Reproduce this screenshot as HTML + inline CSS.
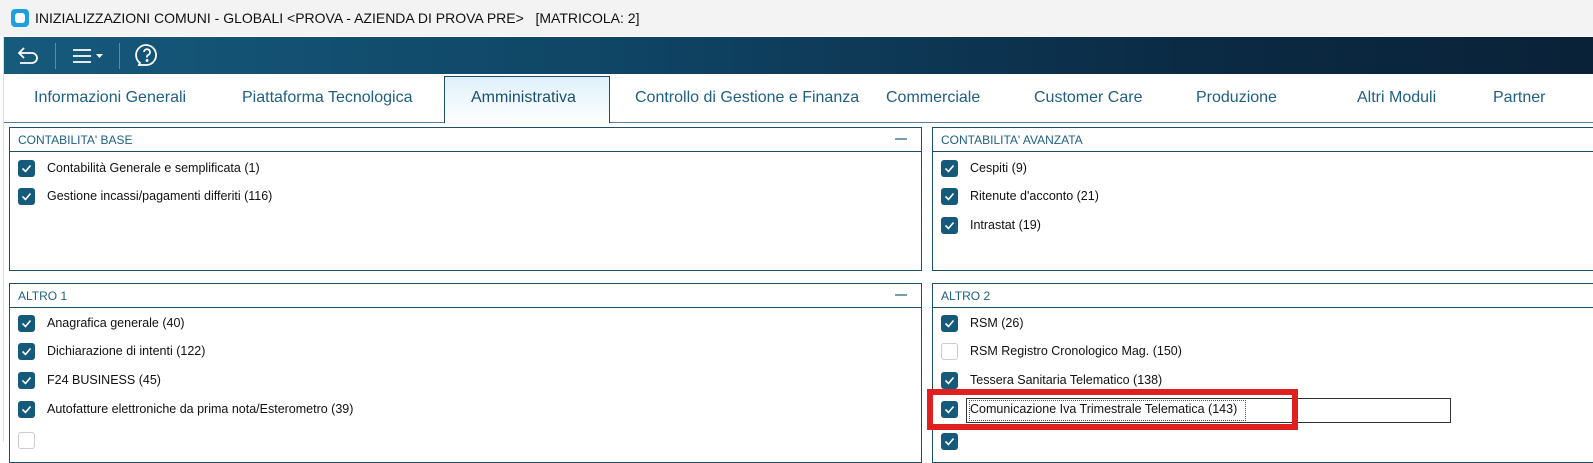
<!DOCTYPE html>
<html><head><meta charset="utf-8"><style>
*{box-sizing:border-box;margin:0;padding:0}
body{width:1593px;height:442px;overflow:hidden;background:#fff;font-family:"Liberation Sans",sans-serif;position:relative}
.abs{position:absolute}
.title{left:0;top:0;width:1593px;height:36px;background:#f3f3f3;font-size:14px;color:#111;}
.tb{left:4px;top:37px;width:1589px;height:37px;background:linear-gradient(90deg,#165a7c 0%,#0f4464 40%,#0b2a44 75%,#0a2238 100%)}
.tab{top:89px;font-size:16px;color:#1e5f85}
.panel{border:1px solid #1d4f6a;background:#fff}
.ph{position:absolute;left:0;right:0;top:0;height:24px;border-bottom:1px solid #1d4f6a;font-size:12px;color:#1e5f85;padding:5px 0 0 8px}
.cb{position:absolute;width:17px;height:17px;border-radius:3px;background:#155a7a}
.cb svg{position:absolute;left:3px;top:3px}
.cb.off{background:#fff;border:1px solid #ccc}
.lb{position:absolute;font-size:12.5px;color:#111}
.min{position:absolute;right:14px;top:10px;width:12px;height:2px;background:#7a9cb0}
</style></head><body>
<div class="abs title">
 <div class="abs" style="left:11px;top:9px;width:18px;height:18px;border-radius:4px;background:#1ea0e0"><div class="abs" style="left:4px;top:4px;width:10px;height:10px;border-radius:3px;background:#fff"></div></div>
 <div class="abs" style="left:35px;top:10px">INIZIALIZZAZIONI COMUNI - GLOBALI &lt;PROVA - AZIENDA DI PROVA PRE&gt;&nbsp;&nbsp;&nbsp;[MATRICOLA: 2]</div>
</div>
<div class="abs" style="left:0;top:36px;width:4px;height:406px;background:#fff;border-right:1px solid #ddd"></div>
<div class="abs tb">
 <svg class="abs" style="left:12px;top:8px" width="26" height="22" viewBox="0 0 26 22" fill="none" stroke="#fff" stroke-width="1.8"><path d="M8 3 L3 8 L8 13 M3 8 H16 a5 5 0 0 1 0 10 H4"/></svg>
 <div class="abs" style="left:51px;top:6px;width:1px;height:26px;background:#5d8aa5"></div>
 <svg class="abs" style="left:68px;top:10px" width="34" height="18" viewBox="0 0 34 18" stroke="#fff" stroke-width="1.8"><path d="M1 3H19M1 9H19M1 15H19"/><path d="M24 7h7l-3.5 4z" fill="#fff" stroke="none"/></svg>
 <div class="abs" style="left:115px;top:6px;width:1px;height:26px;background:#5d8aa5"></div>
 <svg class="abs" style="left:130px;top:5px" width="26" height="26" viewBox="0 0 26 26" fill="none" stroke="#fff" stroke-width="1.8"><path d="M6 21 A10 10 0 1 1 13 23 H5 Z"/><path d="M10 10a3 3 0 1 1 4 3c-1 .5-1 1-1 2.5"/><circle cx="13" cy="18.5" r=".6" fill="#fff"/></svg>
</div>
<div class="abs" style="left:4px;top:122px;width:1589px;height:1px;background:#5a7d94"></div>
<div class="abs" style="left:444px;top:76px;width:166px;height:47px;border:1px solid #1d4f6a;border-bottom:none;background:linear-gradient(#dff0fb,#fff)"></div>
<div class="abs tab" style="left:34px">Informazioni Generali</div>
<div class="abs tab" style="left:242px">Piattaforma Tecnologica</div>
<div class="abs tab" style="left:471px;color:#1a4f6e">Amministrativa</div>
<div class="abs tab" style="left:635px">Controllo di Gestione e Finanza</div>
<div class="abs tab" style="left:886px">Commerciale</div>
<div class="abs tab" style="left:1034px">Customer Care</div>
<div class="abs tab" style="left:1196px">Produzione</div>
<div class="abs tab" style="left:1357px">Altri Moduli</div>
<div class="abs tab" style="left:1493px">Partner</div>

<div class="abs panel" style="left:9px;top:127px;width:913px;height:144px"><div class="ph">CONTABILITA' BASE</div><div class="min"></div></div>
<div class="abs panel" style="left:932px;top:127px;width:680px;height:144px"><div class="ph">CONTABILITA' AVANZATA</div></div>
<div class="abs panel" style="left:9px;top:283px;width:913px;height:180px"><div class="ph">ALTRO 1</div><div class="min"></div></div>
<div class="abs panel" style="left:932px;top:283px;width:680px;height:180px"><div class="ph">ALTRO 2</div></div>

<div id="items"></div>
<script>
const ck='<svg width="11" height="11" viewBox="0 0 11 11"><path d="M1.5 5.5 L4.5 8.5 L9.5 2.5" fill="none" stroke="#fff" stroke-width="1.6"/></svg>';
const items=[[18,160,"Contabilità Generale e semplificata (1)",1],[18,188,"Gestione incassi/pagamenti differiti (116)",1],
[941,160,"Cespiti (9)",1],[941,188,"Ritenute d'acconto (21)",1],[941,217,"Intrastat (19)",1],
[18,315,"Anagrafica generale (40)",1],[18,343,"Dichiarazione di intenti (122)",1],[18,372,"F24 BUSINESS (45)",1],[18,401,"Autofatture elettroniche da prima nota/Esterometro (39)",1],[18,432,"",0],
[941,315,"RSM (26)",1],[941,343,"RSM Registro Cronologico Mag. (150)",0],[941,372,"Tessera Sanitaria Telematico (138)",1],[941,401,"Comunicazione Iva Trimestrale Telematica (143)",1],[941,433,"",1]];
let h='';for(const [x,y,t,c] of items){h+=`<div class="cb${c?'':' off'}" style="left:${x}px;top:${y}px">${c?ck:''}</div><div class="lb" style="left:${x+29}px;top:${y+1}px">${t}</div>`}
document.getElementById('items').innerHTML=h;
</script>
<div class="abs" style="left:966px;top:398px;width:485px;height:25px;border:1px solid #333"></div>
<div class="abs" style="left:969px;top:400px;width:277px;height:21px;border:1px dotted #555"></div>
<div class="abs" style="left:927px;top:389px;width:371px;height:41px;border:6px solid #e0201e"></div>
</body></html>
